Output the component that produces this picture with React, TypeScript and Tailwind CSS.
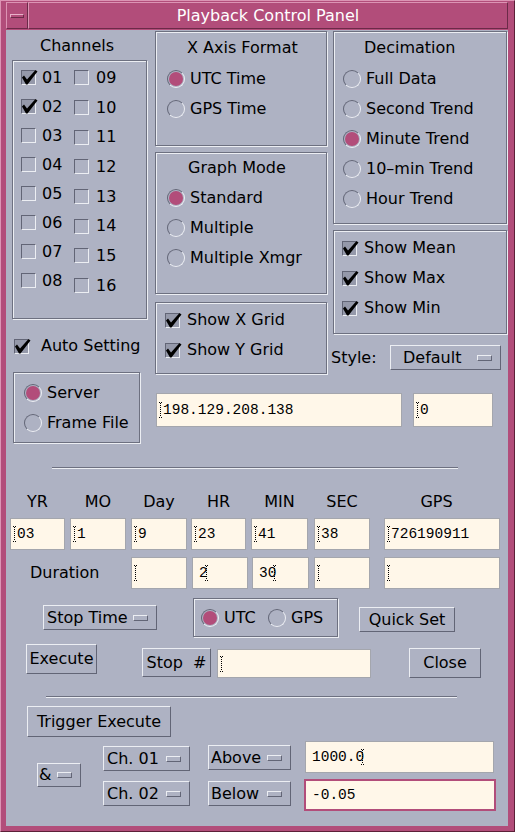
import type { ReactNode } from "react";

const etched = "border border-[#6d7080] shadow-[inset_1px_1px_0_#eceef3,1px_1px_0_#eceef3]";
const raised = "border border-t-[#eceef3] border-l-[#eceef3] border-r-[#626576] border-b-[#626576]";
const sunken = "border border-t-[#626576] border-l-[#626576] border-r-[#eceef3] border-b-[#eceef3]";

function Check({ on }: { on?: boolean }) {
  return (
    <span className={`relative block w-[15px] h-[15px] shrink-0 ${sunken} ${on ? "bg-[#9599aa]" : ""}`}>
      {on && (
        <svg className="absolute -left-[1px] -top-[1px] overflow-visible" width="18" height="16" viewBox="0 0 18 16">
          <path d="M1 7.5 L3 5.5 L6 9.5 L14.5 0 L16.5 1.5 L6.5 14.5 L5 14.5 Z" fill="black" />
        </svg>
      )}
    </span>
  );
}

function Radio({ on }: { on?: boolean }) {
  return (
    <span className={`flex items-center justify-center w-[18px] h-[18px] shrink-0 rounded-full ${sunken}`}>
      {on && <span className="w-[14px] h-[14px] rounded-full bg-[#b24d7a]" />}
    </span>
  );
}

function Cursor({ end }: { end?: boolean }) {
  return (
    <svg width="4" height="16" viewBox="0 0 4 16" className={`shrink-0 ${end ? "-ml-[3px]" : ""}`}>
      <path d="M0 0.5h4M0 15.5h4" stroke="black" strokeDasharray="1 1" />
      <path d="M1.5 1v14" stroke="black" strokeDasharray="1 1" />
    </svg>
  );
}

function Field({ className = "", value = "", cur }: { className?: string; value?: string; cur?: "start" | "end" }) {
  return (
    <div
      className={`flex items-center bg-[#fff7e9] font-['Liberation_Mono',monospace] text-[14.5px] leading-none text-black ${
        cur === "start" ? "pl-[2px]" : "pl-[6px]"
      } ${className}`}
    >
      {cur === "start" && <Cursor />}
      <span>{value}</span>
      {cur === "end" && <Cursor end />}
    </div>
  );
}

function Btn({ className = "", children }: { className?: string; children: ReactNode }) {
  return <div className={`flex items-center justify-center ${raised} ${className}`}>{children}</div>;
}

function Opt({ className = "", label }: { className?: string; label: string }) {
  return (
    <div className={`flex items-center pr-[8px] ${raised} ${className}`}>
      <span className="flex-1 whitespace-pre">{label}</span>
      <span className={`block w-[15px] h-[6px] ${raised}`} />
    </div>
  );
}

function RadioRow({ on, label }: { on?: boolean; label: string }) {
  return (
    <div className="h-[30px] flex items-center gap-[5px]">
      <Radio on={on} />
      <span>{label}</span>
    </div>
  );
}

function CheckRow({ on, label, gap = "gap-[7px]" }: { on?: boolean; label: string; gap?: string }) {
  return (
    <div className={`h-[30px] flex items-center ${gap}`}>
      <Check on={on} />
      <span>{label}</span>
    </div>
  );
}

const fieldBorder = "border border-[#a4a6ad]";

export default function App() {
  const colA = ["01", "02", "03", "04", "05", "06", "07", "08"];
  const colB = ["09", "10", "11", "12", "13", "14", "15", "16"];

  return (
    <div className="w-[515px] h-[832px] flex flex-col bg-[#b24d7a] border border-t-[#dc94b4] border-l-[#dc94b4] border-r-[#5c2038] border-b-[#5c2038] pl-[5px] pr-[6px] pb-[5px] font-['DejaVu_Sans',sans-serif] text-[16px] text-black overflow-hidden">
      {/* title bar */}
      <div className="h-[29px] pt-[1px] pb-[1px] flex">
        <div className="w-[22px] h-[27px] flex items-center justify-center border border-t-[#dc94b4] border-l-[#dc94b4] border-r-[#6b2a48] border-b-[#6b2a48]">
          <span className="block w-[14px] h-[4px] border border-t-[#e8b0c8] border-l-[#e8b0c8] border-r-[#6b2a48] border-b-[#6b2a48]" />
        </div>
        <div className="flex-1 h-[27px] flex items-center justify-center text-white border border-t-[#dc94b4] border-l-[#dc94b4] border-r-[#6b2a48] border-b-[#6b2a48]">
          Playback Control Panel
        </div>
      </div>

      {/* content */}
      <div className="w-[502px] h-[796px] bg-[#aeb2c3] flex flex-col">
        <div className="flex items-start pt-[1px]">
          {/* left column */}
          <div className="ml-[5px] w-[136px] flex flex-col">
            <div className="h-[29px] flex items-center pl-[29px]">Channels</div>
            <div className={`ml-[1px] w-[135px] h-[259px] flex pl-[8px] pt-[2px] ${etched}`}>
              <div className="w-[53px] flex flex-col">
                {colA.map((c, i) => (
                  <div key={c} className="h-[29px] flex items-center gap-[6px]">
                    <Check on={i < 2} />
                    <span>{c}</span>
                  </div>
                ))}
              </div>
              <div className="flex flex-col">
                {colB.map((c) => (
                  <div key={c} className="h-[29.7px] flex items-center gap-[7px]">
                    <Check />
                    <span>{c}</span>
                  </div>
                ))}
              </div>
            </div>
            <div className="mt-[17px] ml-[3px] h-[20px] flex items-center gap-[12px]">
              <Check on />
              <span>Auto Setting</span>
            </div>
            <div className={`mt-[16px] ml-[2px] w-[127px] h-[71px] pt-[5px] pl-[10px] ${etched}`}>
              <RadioRow on label="Server" />
              <RadioRow label="Frame File" />
            </div>
          </div>

          {/* right part */}
          <div className="ml-[8px] flex flex-col">
            <div className="flex items-start">
              <div className="w-[172px] flex flex-col">
                <div className={`h-[115px] pl-[11px] ${etched}`}>
                  <div className="h-[32px] flex items-center pl-[20px]">X Axis Format</div>
                  <RadioRow on label="UTC Time" />
                  <RadioRow label="GPS Time" />
                </div>
                <div className={`mt-[6px] h-[142px] pl-[11px] ${etched}`}>
                  <div className="h-[30px] flex items-center pl-[21px]">Graph Mode</div>
                  <RadioRow on label="Standard" />
                  <RadioRow label="Multiple" />
                  <RadioRow label="Multiple Xmgr" />
                </div>
                <div className={`mt-[8px] h-[72px] pl-[9px] pt-[2px] ${etched}`}>
                  <CheckRow on label="Show X Grid" />
                  <CheckRow on label="Show Y Grid" />
                </div>
              </div>

              <div className="ml-[6px] w-[174px] flex flex-col">
                <div className={`h-[193px] pl-[9px] ${etched}`}>
                  <div className="h-[32px] flex items-center pl-[21px]">Decimation</div>
                  <RadioRow label="Full Data" />
                  <RadioRow label="Second Trend" />
                  <RadioRow on label="Minute Trend" />
                  <RadioRow label="10–min Trend" />
                  <RadioRow label="Hour Trend" />
                </div>
                <div className={`mt-[6px] h-[104px] pl-[8px] pt-[2px] ${etched}`}>
                  <CheckRow on label="Show Mean" />
                  <CheckRow on label="Show Max" />
                  <CheckRow on label="Show Min" />
                </div>
                <div className="mt-[11px] -ml-[2px] h-[25px] flex items-center">
                  <span className="w-[59px]">Style:</span>
                  <Opt className="w-[111px] h-[25px] pl-[12px]" label="Default" />
                </div>
              </div>
            </div>

            <div className="mt-[19px] flex">
              <Field className={`ml-[1px] w-[246px] h-[34px] ${fieldBorder}`} value="198.129.208.138" cur="start" />
              <Field className={`ml-[11px] w-[80px] h-[34px] ${fieldBorder}`} value="0" cur="start" />
            </div>
          </div>
        </div>

        <div className="mt-[24px] ml-[46px] w-[406px] h-[2px] border-t border-t-[#6d7080] border-b border-b-[#eceef3]" />

        {/* time labels */}
        <div className="mt-[23px] h-[20px] flex items-center">
          <span className="ml-[4px] w-[55px] text-center">YR</span>
          <span className="ml-[5px] w-[56px] text-center">MO</span>
          <span className="ml-[5px] w-[56px] text-center">Day</span>
          <span className="ml-[4px] w-[55px] text-center">HR</span>
          <span className="ml-[5px] w-[57px] text-center">MIN</span>
          <span className="ml-[6px] w-[56px] text-center">SEC</span>
          <span className="ml-[14px] w-[116px] text-center pr-[11px]">GPS</span>
        </div>

        <div className="mt-[6px] h-[32px] flex">
          <Field className={`ml-[4px] w-[55px] ${fieldBorder}`} value="03" cur="start" />
          <Field className={`ml-[5px] w-[56px] ${fieldBorder}`} value="1" cur="start" />
          <Field className={`ml-[5px] w-[56px] ${fieldBorder}`} value="9" cur="start" />
          <Field className={`ml-[4px] w-[55px] ${fieldBorder}`} value="23" cur="start" />
          <Field className={`ml-[5px] w-[57px] ${fieldBorder}`} value="41" cur="start" />
          <Field className={`ml-[6px] w-[56px] ${fieldBorder}`} value="38" cur="start" />
          <Field className={`ml-[14px] w-[116px] ${fieldBorder}`} value="726190911" cur="start" />
        </div>

        <div className="mt-[7px] h-[32px] flex">
          <span className="ml-[4px] w-[121px] pl-[20px] flex items-center">Duration</span>
          <Field className={`w-[56px] ${fieldBorder}`} cur="start" />
          <Field className={`ml-[5px] w-[56px] ${fieldBorder}`} value="2" cur="end" />
          <Field className={`ml-[4px] w-[57px] ${fieldBorder}`} value="30" cur="end" />
          <Field className={`ml-[5px] w-[56px] ${fieldBorder}`} cur="start" />
          <Field className={`ml-[14px] w-[116px] ${fieldBorder}`} cur="start" />
        </div>

        <div className="mt-[9px] flex items-start">
          <Opt className="ml-[37px] mt-[7px] w-[114px] h-[25px] pl-[3px]" label="Stop Time" />
          <div className={`ml-[36px] w-[145px] h-[39px] flex items-center pl-[7px] ${etched}`}>
            <div className="w-[67px] flex items-center gap-[5px]">
              <Radio on />
              <span>UTC</span>
            </div>
            <div className="flex items-center gap-[5px]">
              <Radio />
              <span>GPS</span>
            </div>
          </div>
          <Btn className="ml-[21px] mt-[9px] w-[96px] h-[25px]">Quick Set</Btn>
        </div>

        <div className="mt-[7px] flex items-start">
          <Btn className="ml-[20px] w-[71px] h-[30px]">Execute</Btn>
          <Btn className="ml-[45px] mt-[4px] w-[69px] h-[29px] whitespace-pre">Stop  #</Btn>
          <Field className={`ml-[6px] mt-[5px] w-[154px] h-[29px] ${fieldBorder}`} cur="start" />
          <Btn className="ml-[38px] mt-[4px] w-[72px] h-[30px]">Close</Btn>
        </div>

        <div className="mt-[18px] ml-[40px] w-[411px] h-[2px] border-t border-t-[#6d7080] border-b border-b-[#eceef3]" />

        <Btn className="mt-[8px] ml-[21px] w-[144px] h-[31px]">Trigger Execute</Btn>

        <div className="mt-[4px] flex items-start">
          <Opt className="ml-[31px] mt-[22px] w-[44px] h-[24px] pl-[1px]" label="&" />
          <div className="ml-[22px] w-[87px] flex flex-col">
            <Opt className="mt-[5px] h-[25px] pl-[3px]" label="Ch. 01" />
            <Opt className="mt-[10px] h-[25px] pl-[3px]" label="Ch. 02" />
          </div>
          <div className="ml-[18px] w-[83px] flex flex-col">
            <Opt className="mt-[4px] h-[25px] pl-[2px]" label="Above" />
            <Opt className="mt-[11px] h-[25px] pl-[2px]" label="Below" />
          </div>
          <div className="ml-[13px] w-[192px] flex flex-col">
            <Field className={`ml-[1px] w-[189px] h-[32px] ${fieldBorder}`} value="1000.0" cur="end" />
            <Field className="mt-[6px] w-[192px] h-[32px] border-2 border-[#b24d7a]" value="-0.05" />
          </div>
        </div>
      </div>
    </div>
  );
}
